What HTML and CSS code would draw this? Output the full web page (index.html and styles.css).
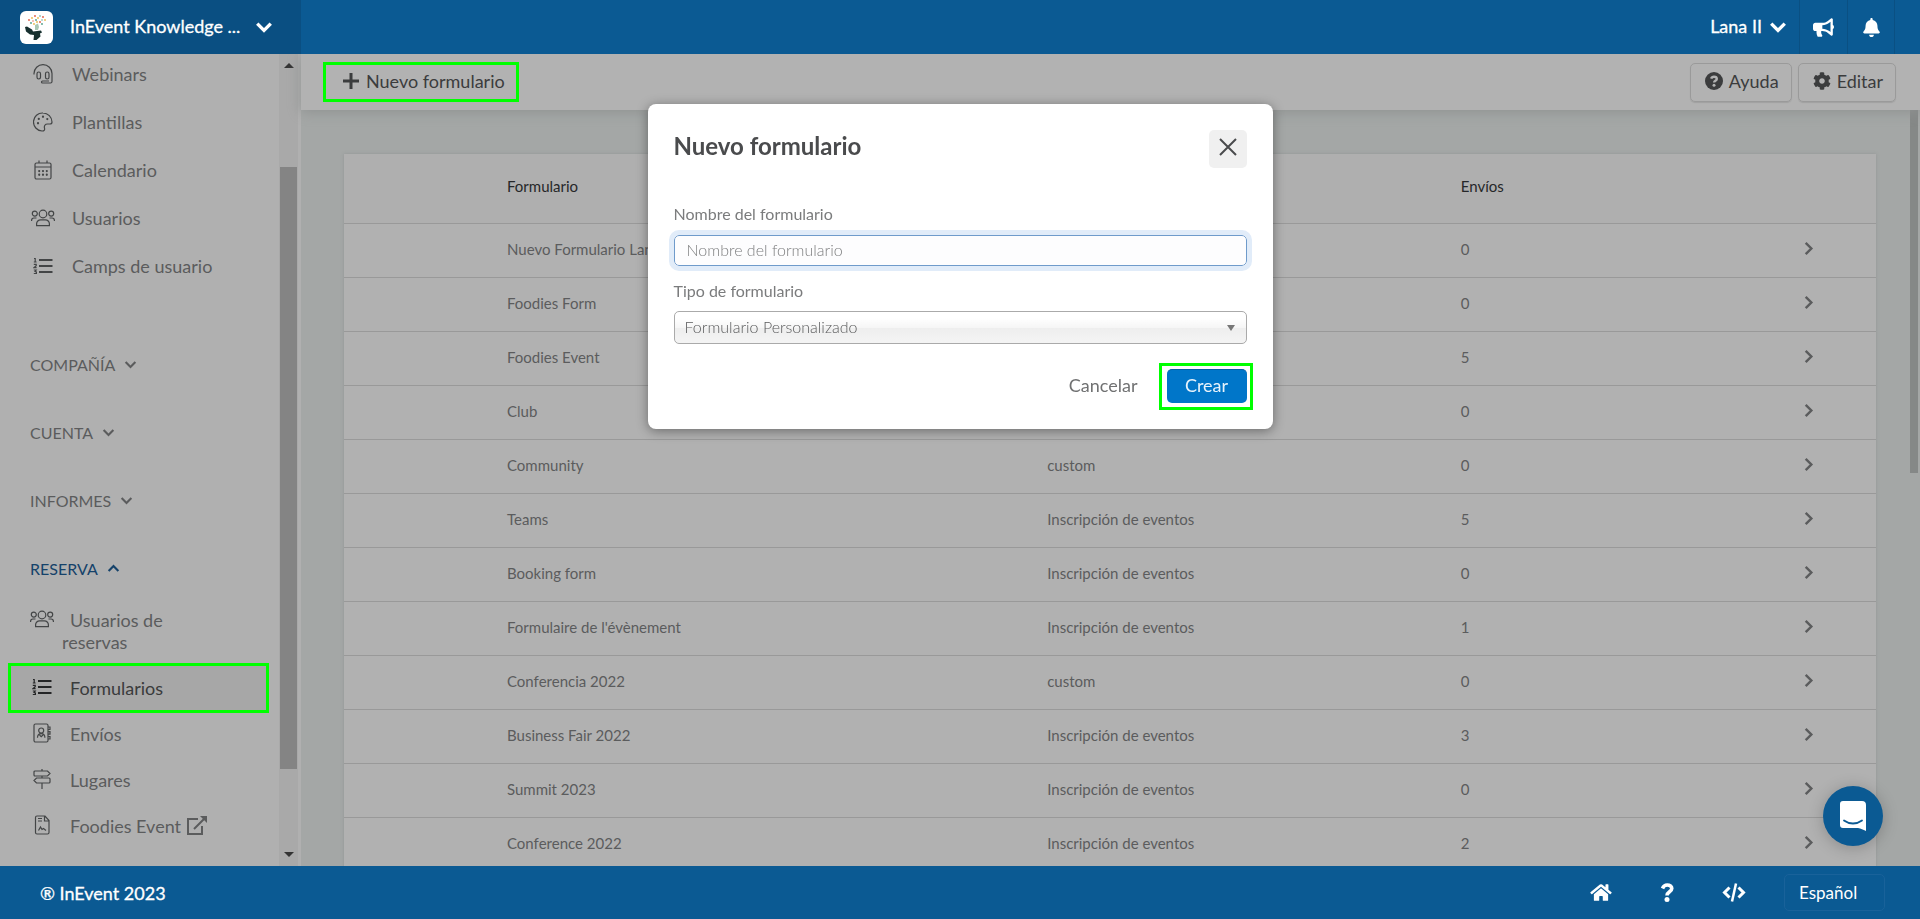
FILE: index.html
```html
<!DOCTYPE html>
<html lang="es">
<head>
<meta charset="utf-8">
<meta name="viewport" content="width=device-width, initial-scale=1">
<title>InEvent - Formularios</title>
<link rel="stylesheet" href="styles.css">
</head>
<body>
<svg class="sprite" aria-hidden="true">
  <symbol id="chev-down" viewBox="0 0 16 16"><path d="M2 5l6 6 6-6"/></symbol>
  <symbol id="chev-up" viewBox="0 0 16 16"><path d="M2 11l6-6 6 6"/></symbol>
  <symbol id="chev-right" viewBox="0 0 16 16"><path d="M5 2l6 6-6 6"/></symbol>
  <symbol id="users" viewBox="0 0 24 20"><circle cx="12" cy="6" r="3.8"/><circle cx="3.8" cy="5.6" r="2.5"/><circle cx="20.2" cy="5.6" r="2.5"/><path d="M5.6 17.6v-1.8a4 4 0 0 1 4-4h4.800a4 4 0 0 1 4 4v1.800zM.6 13v-.8a2.300 2.300 0 0 1 2.300-2.200h2.600M23.400 13v-.8a2.300 2.300 0 0 0-2.300-2.200h-2.600"/></symbol>
  <symbol id="list" viewBox="0 0 20 18"><path class="rule" d="M6 3h13.500M6 9h13.500M6 15h13.500"/><path d="M1 1.500h1.200v3.500M.8 5h2.800M.8 7.300h2.400v1.500l-2.200 1.900h2.600M.8 13h2.400l-1.200 1.500 1.400.5v1.500h-2.600"/></symbol>
</svg>

<header class="topbar">
  <button class="company" type="button">
    <svg class="logo" viewBox="0 0 33 33" aria-hidden="true">
      <rect width="33" height="33" rx="6" fill="#fff"/>
      <path d="M5 16l2-.5 5 3 1 2 8-1 1 2-2 1 .5 3-4 3.500h-3l.5-5-4-.5-4-3z" fill="#17302f"/>
      <path d="M15 14l3-1.500 1 3.500-1 3h-3z" fill="#a9c8b4"/>
      <g fill="#e0563f"><circle cx="9" cy="9" r=".9"/><circle cx="15" cy="5" r=".9"/><circle cx="23" cy="6" r=".9"/><circle cx="20" cy="11" r=".9"/><circle cx="13" cy="10" r=".7"/></g>
      <g fill="#e9b949"><circle cx="12" cy="7" r=".9"/><circle cx="18" cy="7" r=".9"/><circle cx="25" cy="9" r=".9"/><circle cx="14" cy="13" r=".9"/><circle cx="17" cy="11" r=".9"/></g>
      <g fill="#4d9c86"><circle cx="11" cy="12" r=".9"/><circle cx="20" cy="5" r=".8"/><circle cx="22" cy="13" r=".9"/><circle cx="16" cy="9" r=".9"/><circle cx="22" cy="9" r=".7"/></g>
    </svg>
    <span class="company-name">InEvent Knowledge ...</span>
    <svg class="chev chev-lg" aria-hidden="true"><use href="#chev-down"/></svg>
  </button>
  <div class="topbar-tools">
    <button class="user" type="button"><span>Lana II</span> <svg class="chev chev-lg" aria-hidden="true"><use href="#chev-down"/></svg></button>
    <button class="tool" type="button" aria-label="Novedades"><svg width="21" height="19" viewBox="0 0 576 512" fill="currentColor"><path d="M576 240c0-23.630-12.950-44.040-32-55.120V32.010C544 23.260 537.020 0 512 0c-7.120 0-14.190 2.380-19.980 7.020l-85.030 68.030C364.280 109.190 310.660 128 256 128H64c-35.350 0-64 28.650-64 64v96c0 35.350 28.650 64 64 64h33.700c-1.390 10.480-2.180 21.140-2.180 32 0 39.770 9.260 77.350 25.560 110.940 5.190 10.690 16.520 17.060 28.400 17.060h74.280c26.050 0 41.690-29.840 25.900-50.560-16.400-21.520-26.150-48.360-26.150-77.440 0-11.110 1.620-21.790 4.410-32H256c54.660 0 108.280 18.810 150.980 52.950l85.030 68.030a32.020 32.020 0 0 0 19.980 7.020c24.920 0 32-22.780 32-32V295.130C563.050 284.040 576 263.630 576 240zm-96 141.420l-33.050-26.440C392.950 311.780 325.120 288 256 288v-96c69.120 0 136.950-23.780 190.950-66.980L480 98.580v282.840z"/></svg></button>
    <button class="tool" type="button" aria-label="Notificaciones"><svg width="17" height="19" viewBox="0 0 448 512" fill="currentColor"><path d="M224 512c35.320 0 63.970-28.650 63.970-64H160.030c0 35.350 28.650 64 63.970 64zm215.390-149.710c-19.320-20.760-55.470-51.990-55.470-154.290 0-77.700-54.480-139.900-127.940-155.160V32c0-17.670-14.320-32-31.980-32s-31.980 14.330-31.980 32v20.840C118.560 68.100 64.080 130.300 64.080 208c0 102.300-36.150 133.530-55.470 154.290-6 6.450-8.660 14.160-8.610 21.710.11 16.400 12.980 32 32.100 32h383.800c19.120 0 32-15.600 32.100-32 .05-7.550-2.610-15.270-8.610-21.710z"/></svg></button>
  </div>
</header>

<div class="body">
  <aside class="sidebar">
    <nav class="nav" aria-label="Principal">
      <ul class="menu">
        <li><a href="#"><svg class="ico" viewBox="0 0 20 20"><path d="M1 10.500V9.600a9 9 0 0 1 18 0v7.900a1.500 1.500 0 0 1-1.500 1.500H9.500a1 1 0 0 1 0-2H16"/><rect x="4" y="8" width="3.500" height="7" rx="1.700"/><rect x="12.500" y="8" width="3.500" height="7" rx="1.700"/></svg>Webinars</a></li>
        <li><a href="#"><svg class="ico" viewBox="0 0 20 20"><path d="M10 1a9 9 0 0 0-1 18c2 .2 3-1 2.500-2.800-.6-2.300.6-4.200 3-4.200h2.500c1.300 0 2-.7 2-2A9.200 9.200 0 0 0 10 1z"/><path class="dot" d="M5 11.200v.1M5.800 6.800v.1M10 4.700v.1M14.300 7v.1"/></svg>Plantillas</a></li>
        <li><a href="#"><svg class="ico" viewBox="0 0 20 20"><rect x="2" y="3" width="16" height="16" rx="1.500"/><path d="M2 7h16M6 .5V3M14 .5V3"/><path class="dot" d="M6.200 11v.1M10 11v.1M13.800 11v.1M6.200 14.700v.1M10 14.700v.1M13.800 14.700v.1"/></svg>Calendario</a></li>
        <li><a href="#"><svg class="ico ico-wide"><use href="#users"/></svg>Usuarios</a></li>
        <li><a href="#"><svg class="ico"><use href="#list"/></svg>Camps de usuario</a></li>
      </ul>
      <div class="groups">
        <button class="group" type="button">COMPAÑÍA <svg class="chev" aria-hidden="true"><use href="#chev-down"/></svg></button>
        <button class="group" type="button">CUENTA <svg class="chev" aria-hidden="true"><use href="#chev-down"/></svg></button>
        <button class="group" type="button">INFORMES <svg class="chev" aria-hidden="true"><use href="#chev-down"/></svg></button>
        <button class="group open" type="button" aria-expanded="true">RESERVA <svg class="chev" aria-hidden="true"><use href="#chev-up"/></svg></button>
      </div>
      <ul class="submenu">
        <li><a href="#"><svg class="ico ico-wide"><use href="#users"/></svg><span class="sub-label">Usuarios de reservas</span></a></li>
        <li><a class="active marked" href="#" aria-current="page"><svg class="ico"><use href="#list"/></svg><span class="sub-label">Formularios</span></a></li>
        <li><a href="#"><svg class="ico" viewBox="0 0 20 20"><rect x="2" y="1" width="14" height="18" rx="1.500"/><circle cx="9.200" cy="7.500" r="2.500"/><path d="M5.500 14.800c0-5.500 7.400-5.500 7.400 0M7.500 12l1.700 1.700L11 12M16 4h2v2.500h-2M16 8.700h2v2.500h-2M16 13.500h2V16h-2"/></svg><span class="sub-label">Envíos</span></a></li>
        <li><a href="#"><svg class="ico" viewBox="0 0 20 20"><path d="M10 0v2M10 7v2M10 14v6M3 2h12.500L18 4.500 15.500 7H3a1 1 0 0 1-1-1V3a1 1 0 0 1 1-1zM17 9H4.500L2 11.500 4.500 14H17a1 1 0 0 0 1-1v-3a1 1 0 0 0-1-1z"/></svg><span class="sub-label">Lugares</span></a></li>
        <li><a href="#"><svg class="ico" viewBox="0 0 20 20"><path d="M5 1h8l4 4.500v12a1.500 1.500 0 0 1-1.500 1.500h-10.500a1.500 1.500 0 0 1-1.500-1.500v-15A1.500 1.500 0 0 1 5 1zM12.500 1v5H17M6 3.500h4M6 6h4M6.500 15.500l2-3.500 1.500 2.500 1.500-1 2.500 2"/></svg><span class="sub-label">Foodies Event <svg class="ext" viewBox="0 0 22 20" aria-hidden="true"><path d="M12 3H2v15h14v-8M8 13L19 2"/><path class="fill" d="M14 0h7v7z"/></svg></span></a></li>
      </ul>
    </nav>
    <div class="scrollbar" aria-hidden="true"><span class="arrow arrow-up"></span><span class="thumb"></span><span class="arrow arrow-down"></span></div>
  </aside>

  <main class="main">
    <div class="toolbar">
      <button class="new-form marked" type="button"><svg width="16" height="16" viewBox="0 0 16 16" aria-hidden="true"><path d="M8 0v16M0 8h16" stroke="currentColor" stroke-width="3"/></svg>Nuevo formulario</button>
      <div class="toolbar-end">
        <button class="boxed" type="button"><svg width="18" height="18" viewBox="0 0 18 18" aria-hidden="true"><circle cx="9" cy="9" r="9" fill="currentColor"/><path class="knock" d="M6.200 6.700c.4-1.300 1.400-2 2.800-2 1.600 0 2.800.9 2.800 2.200 0 1.700-2.700 1.900-2.700 3.500"/><circle class="knock-dot" cx="9" cy="13.200" r="1.500"/></svg>Ayuda</button>
        <button class="boxed" type="button"><svg width="18" height="18" viewBox="0 0 512 512" fill="currentColor" aria-hidden="true"><path d="M487.400 315.700l-42.600-24.600c4.300-23.200 4.300-47 0-70.200l42.600-24.600c4.900-2.800 7.100-8.600 5.500-14-11.100-35.600-30-67.800-54.700-94.600-3.800-4.100-10-5.100-14.800-2.300L380.800 110c-17.900-15.400-38.500-27.300-60.800-35.100V25.800c0-5.600-3.900-10.500-9.400-11.700-36.700-8.200-74.300-7.800-109.200 0-5.500 1.200-9.400 6.100-9.400 11.700V75c-22.200 7.900-42.800 19.800-60.800 35.100L88.700 85.500c-4.900-2.800-11-1.900-14.800 2.300-24.700 26.700-43.600 58.900-54.700 94.600-1.700 5.400.6 11.200 5.500 14L67.300 221c-4.300 23.200-4.300 47 0 70.200l-42.600 24.600c-4.900 2.800-7.100 8.600-5.500 14 11.100 35.600 30 67.800 54.700 94.600 3.800 4.100 10 5.100 14.800 2.300l42.600-24.600c17.900 15.400 38.500 27.300 60.800 35.100v49.200c0 5.600 3.900 10.500 9.400 11.700 36.700 8.200 74.300 7.800 109.200 0 5.500-1.200 9.400-6.100 9.400-11.700v-49.200c22.200-7.900 42.800-19.800 60.800-35.100l42.600 24.600c4.900 2.800 11 1.900 14.800-2.300 24.700-26.700 43.600-58.900 54.700-94.600 1.500-5.500-.7-11.300-5.600-14.100zM256 336c-44.100 0-80-35.900-80-80s35.900-80 80-80 80 35.900 80 80-35.900 80-80 80z"/></svg>Editar</button>
      </div>
    </div>
    <div class="content">
      <div class="table-area">
        <table class="forms">
          <colgroup><col class="c-name"><col class="c-type"><col class="c-count"><col class="c-go"></colgroup>
          <thead><tr><th scope="col">Formulario</th><th scope="col">Tipo</th><th scope="col">Envíos</th><td></td></tr></thead>
          <tbody>
            <tr><td>Nuevo Formulario Lana</td><td>custom</td><td>0</td><td><svg class="chev"><use href="#chev-right"/></svg></td></tr>
            <tr><td>Foodies Form</td><td>custom</td><td>0</td><td><svg class="chev"><use href="#chev-right"/></svg></td></tr>
            <tr><td>Foodies Event</td><td>custom</td><td>5</td><td><svg class="chev"><use href="#chev-right"/></svg></td></tr>
            <tr><td>Club</td><td>custom</td><td>0</td><td><svg class="chev"><use href="#chev-right"/></svg></td></tr>
            <tr><td>Community</td><td>custom</td><td>0</td><td><svg class="chev"><use href="#chev-right"/></svg></td></tr>
            <tr><td>Teams</td><td>Inscripción de eventos</td><td>5</td><td><svg class="chev"><use href="#chev-right"/></svg></td></tr>
            <tr><td>Booking form</td><td>Inscripción de eventos</td><td>0</td><td><svg class="chev"><use href="#chev-right"/></svg></td></tr>
            <tr><td>Formulaire de l'évènement</td><td>Inscripción de eventos</td><td>1</td><td><svg class="chev"><use href="#chev-right"/></svg></td></tr>
            <tr><td>Conferencia 2022</td><td>custom</td><td>0</td><td><svg class="chev"><use href="#chev-right"/></svg></td></tr>
            <tr><td>Business Fair 2022</td><td>Inscripción de eventos</td><td>3</td><td><svg class="chev"><use href="#chev-right"/></svg></td></tr>
            <tr><td>Summit 2023</td><td>Inscripción de eventos</td><td>0</td><td><svg class="chev"><use href="#chev-right"/></svg></td></tr>
            <tr><td>Conference 2022</td><td>Inscripción de eventos</td><td>2</td><td><svg class="chev"><use href="#chev-right"/></svg></td></tr>
          </tbody>
        </table>
      </div>
      <div class="content-scroll" aria-hidden="true"><span class="thumb"></span></div>
    </div>
  </main>
</div>

<footer class="footer">
  <span class="copyright">® InEvent 2023</span>
  <nav class="footer-tools" aria-label="Pie">
    <a href="#" aria-label="Inicio"><svg width="22" height="19" viewBox="0 0 576 512" fill="currentColor"><path d="M280.370 148.260L96 300.110V464a16 16 0 0 0 16 16l112.060-.29a16 16 0 0 0 15.920-16V368a16 16 0 0 1 16-16h64a16 16 0 0 1 16 16v95.640a16 16 0 0 0 16 16.050L464 480a16 16 0 0 0 16-16V300L295.670 148.260a12.190 12.190 0 0 0-15.300 0zM571.600 251.470L488 182.560V44.050a12 12 0 0 0-12-12h-56a12 12 0 0 0-12 12v72.610L318.470 43a48 48 0 0 0-61 0L4.340 251.470a12 12 0 0 0-1.600 16.900l25.500 31A12 12 0 0 0 45.150 301l235.220-193.740a12.190 12.190 0 0 1 15.300 0L530.900 301a12 12 0 0 0 16.900-1.600l25.500-31a12 12 0 0 0-1.700-16.930z"/></svg></a>
    <a href="#" aria-label="Ayuda"><svg width="22" height="19" viewBox="0 0 22 19" fill="none" stroke="currentColor"><path d="M6.500 5.500C7.500 3 9 2 11.200 2c2.600 0 4.600 1.500 4.600 3.600 0 3.200-4.800 3.200-4.800 6.900" stroke-width="3.600"/><circle cx="11" cy="16.500" r="2.500" fill="currentColor" stroke="none"/></svg></a>
    <a href="#" aria-label="Código"><svg width="24" height="19" viewBox="0 0 24 19" fill="none" stroke="currentColor" stroke-width="3"><path d="M7.500 4.500l-5 5 5 5M16.500 4.500l5 5-5 5"/><path d="M14 .5L10 18.500" stroke-width="2.500"/></svg></a>
  </nav>
  <select class="language" aria-label="Idioma"><option>Español</option></select>
</footer>

<button class="chat" type="button" aria-label="Abrir chat"><svg width="28" height="32" viewBox="0 0 28 32" aria-hidden="true"><path d="M4 1h19a4 4 0 0 1 4 4v26c-3-1.300-5-2.500-8-3H4a3 3 0 0 1-3-3V4a3 3 0 0 1 3-3z" fill="#fff"/><path d="M5 20.500c5.500 4 12.500 4 18 0" fill="none" stroke="#0b5a93" stroke-width="1.800" stroke-linecap="round"/></svg></button>

<form class="modal" role="dialog" aria-labelledby="modal-title">
  <div class="modal-head">
    <h2 id="modal-title">Nuevo formulario</h2>
    <button class="close" type="button" aria-label="Cerrar"><svg width="18" height="18" viewBox="0 0 18 18"><path d="M1 1l16 16M17 1L1 17" stroke="currentColor" stroke-width="2"/></svg></button>
  </div>
  <label for="form-name">Nombre del formulario</label>
  <input id="form-name" type="text" placeholder="Nombre del formulario">
  <label for="form-type">Tipo de formulario</label>
  <div class="select-wrap"><select id="form-type"><option>Formulario Personalizado</option></select></div>
  <div class="modal-actions">
    <button class="cancel" type="button">Cancelar</button>
    <span class="create-mark"><button class="create" type="submit">Crear</button></span>
  </div>
</form>
</body>
</html>
```

FILE: styles.css
```css
* { box-sizing: border-box; }
html, body { height: 100%; }
body {
  margin: 0;
  display: flex;
  flex-direction: column;
  overflow: hidden;
  font-family: Lato, "Liberation Sans", sans-serif;
  font-size: 15px;
  color: #5b5c5d;
  background: #a4a7a6;
}
button, input, select { font: inherit; color: inherit; }
button { border: 0; background: none; padding: 0; cursor: pointer; }
a { color: inherit; text-decoration: none; }
ul { list-style: none; margin: 0; padding: 0; }
.sprite { position: absolute; width: 0; height: 0; }
.marked { outline: 3px solid #0f0; outline-offset: -3px; }

.chev { width: 13px; height: 13px; fill: none; stroke: currentColor; stroke-width: 2.6; flex: none; }
.chev-lg { width: 18px; height: 18px; stroke-width: 3; }

/* top bar */
.topbar { flex: none; height: 54px; display: flex; justify-content: space-between; background: #0b5a93; color: #fff; font-size: 18px; position: relative; z-index: 2; }
.company { width: 301px; padding: 0 28px 0 20px; display: flex; align-items: center; background: #0a4f82; }
.logo { width: 33px; height: 33px; margin-right: 17px; }
.company-name, .user span { -webkit-text-stroke: 0.3px currentColor; padding-bottom: 2px; }
.company-name { flex: 1; text-align: left; }
.topbar-tools { display: flex; padding-right: 25px; }
.user { display: flex; align-items: center; gap: 7px; padding-right: 12px; }
.tool { width: 48px; display: flex; align-items: center; justify-content: center; border-left: 1px solid #0a5083; }
.tool:last-child { border-right: 1px solid #0a5083; }

.body { flex: 1; min-height: 0; display: flex; }

/* sidebar */
.sidebar { width: 301px; flex: none; display: flex; background: #b0b0b0; }
.nav { flex: 1; overflow: hidden; font-size: 18px; }
.ico { width: 20px; height: 20px; margin: 0 2px; flex: none; fill: none; stroke: #434546; stroke-width: 1.2; }
.ico-wide { width: 24px; margin: 0; }
.ico .dot { stroke-width: 2.2; stroke-linecap: round; }
.rule { stroke-width: 2; }
.menu { display: flex; flex-direction: column; gap: 8px; padding-left: 31px; }
.menu a { display: flex; align-items: center; gap: 17px; height: 40px; }
.groups { display: flex; flex-direction: column; align-items: flex-start; gap: 40px; padding: 64px 0 0 30px; }
.group { height: 28px; display: flex; align-items: center; gap: 9px; font-size: 16px; }
.group.open { color: #15426a; }
.submenu { padding: 15px 0 0 8px; }
.submenu a { width: 261px; display: flex; padding: 12px 80px 12px 22px; line-height: 22px; }
.submenu .ico { margin-right: 10px; }
.submenu .ico-wide { margin-right: 8px; }
.sub-label { text-indent: 8px; flex: 1; white-space: nowrap; }
.submenu li:first-child .sub-label { white-space: normal; }
.submenu .active { background: #a7a7a7; color: #3a3b3c; margin: -2px 0; padding-top: 14px; padding-bottom: 14px; }
.active .ico { stroke: #242526; }
.ext { width: 22px; height: 20px; vertical-align: -3px; fill: none; stroke: currentColor; stroke-width: 2; }
.ext .fill { fill: currentColor; stroke: none; }
.scrollbar { width: 22px; background: #a9a9a9; border-right: 3px solid #b0b0b0; display: flex; flex-direction: column; align-items: center; padding: 9px 0; }
.scrollbar .thumb { width: 17px; background: #848484; margin: 99px 0 83px; flex: 1; }
.arrow { border: 5px solid transparent; }
.arrow-up { border-top: 0; border-bottom-color: #333; }
.arrow-down { border-bottom: 0; border-top-color: #333; }

/* main */
.main { flex: 1; min-width: 0; display: flex; flex-direction: column; }
.toolbar { flex: none; height: 56px; display: flex; align-items: center; justify-content: space-between; padding: 0 24px 0 22px; background: #b2b2b2; color: #3b3c3d; font-size: 18px; box-shadow: 0 2px 12px #8f9291; z-index: 1; }
.new-form { height: 40px; display: flex; align-items: center; gap: 7px; padding: 0 14px 3px 20px; }
.toolbar-end { display: flex; gap: 6px; }
.boxed { height: 39px; display: flex; align-items: center; gap: 6px; padding: 0 12px 3px 14px; border: 1px solid #9a9a9a; border-radius: 5px; box-shadow: 0 1px 1px #a0a0a0; }
.knock { fill: none; stroke: #b2b2b2; stroke-width: 2.4; }
.knock-dot { fill: #b2b2b2; }
.content { flex: 1; min-height: 0; display: flex; overflow: hidden; }
.table-area { flex: 1; min-width: 0; padding: 44px 34px 0 43px; }
.forms { width: 100%; table-layout: fixed; border-collapse: collapse; background: #b1b1b1; box-shadow: 0 0 3px #929594; font-size: 15px; }
.c-name { width: 45.9%; }
.c-type { width: 27%; }
.c-count { width: 22.2%; }
.forms th, .forms td { height: 54px; padding: 0 0 3px; text-align: left; font-weight: 400; border-bottom: 1px solid #999; }
.forms th:first-child, .forms td:first-child { padding-left: 163px; }
.forms thead th, .forms thead td { height: 69px; padding-bottom: 4px; color: #262729; background: #afafaf; }
.forms .chev { display: block; width: 15px; height: 15px; }
.content-scroll { width: 10px; }
.content-scroll .thumb { display: block; width: 8px; height: 48%; background: #858887; }

/* footer */
.footer { flex: none; height: 53px; display: flex; align-items: center; background: #0b5a93; color: #fff; font-size: 18px; padding: 0 35px 0 40px; }
.copyright { -webkit-text-stroke: 0.3px currentColor; }
.footer-tools { margin-left: auto; display: flex; gap: 44px; margin-right: 38px; }
.footer-tools a { display: flex; }
.language { width: 101px; height: 37px; padding: 0 14px; font-size: 17px; appearance: none; background: transparent; border: 1px solid #19629a; border-radius: 5px; }
.language option { color: #333; }

.chat { position: fixed; right: 37px; bottom: 73px; width: 60px; height: 60px; border-radius: 50%; background: #0b5a93; display: flex; align-items: center; justify-content: center; box-shadow: 0 2px 16px rgba(0, 0, 0, .22); }

/* dialog */
.modal { position: fixed; top: 104px; left: 0; right: 0; margin: 0 auto; width: 625px; padding: 26px 26px 19px; display: flex; flex-direction: column; background: #fff; border-radius: 8px; box-shadow: 0 2px 12px rgba(0, 0, 0, .4); z-index: 3; color: #7b7c7d; font-size: 16px; }
.modal-head { display: flex; justify-content: space-between; margin-bottom: 34px; }
.modal h2 { margin: 0; font-size: 24px; line-height: 32px; font-weight: 700; color: #4a4b4d; }
.close { width: 38px; height: 38px; padding-bottom: 4px; display: flex; align-items: center; justify-content: center; background: #f0f0f0; border-radius: 5px; color: #4a4b4d; }
.modal label { line-height: 24px; }
.modal input { height: 31px; margin: 9px 0 13px; padding: 0 12px 3px; border: 1px solid #6f9bcb; border-radius: 5px; background: #fdfdfe; outline: 5px solid #e1ecf9; font-weight: 300; }
.modal input::placeholder { color: #7c7d7e; opacity: 1; }
.select-wrap { display: grid; margin-top: 8px; }
.select-wrap::after { content: ""; grid-area: 1 / 1; place-self: center end; margin-right: 12px; border: 4px solid transparent; border-top: 6px solid #777; border-bottom: 0; pointer-events: none; }
.modal select { grid-area: 1 / 1; width: 100%; height: 33px; padding: 0 10px 2px; appearance: none; border: 1px solid #aaa; border-radius: 5px; background: linear-gradient(#fff 20%, #f6f6f6 50%, #eee 52%, #f4f4f4 100%); font-weight: 300; color: #5a5b5c; }
.modal-actions { display: flex; justify-content: flex-end; align-items: center; gap: 21px; margin: 19px -6px 0 0; font-size: 18px; }
.cancel { color: #707172; padding-bottom: 4px; }
.create-mark { border: 3px solid #0f0; padding: 3px 3px 4px 5px; }
.create { display: block; width: 80px; height: 34px; padding-bottom: 4px; border-radius: 5px; background: #0076c9; border-top: 1px solid #0a5fa0; color: #e8f3fb; }
```
